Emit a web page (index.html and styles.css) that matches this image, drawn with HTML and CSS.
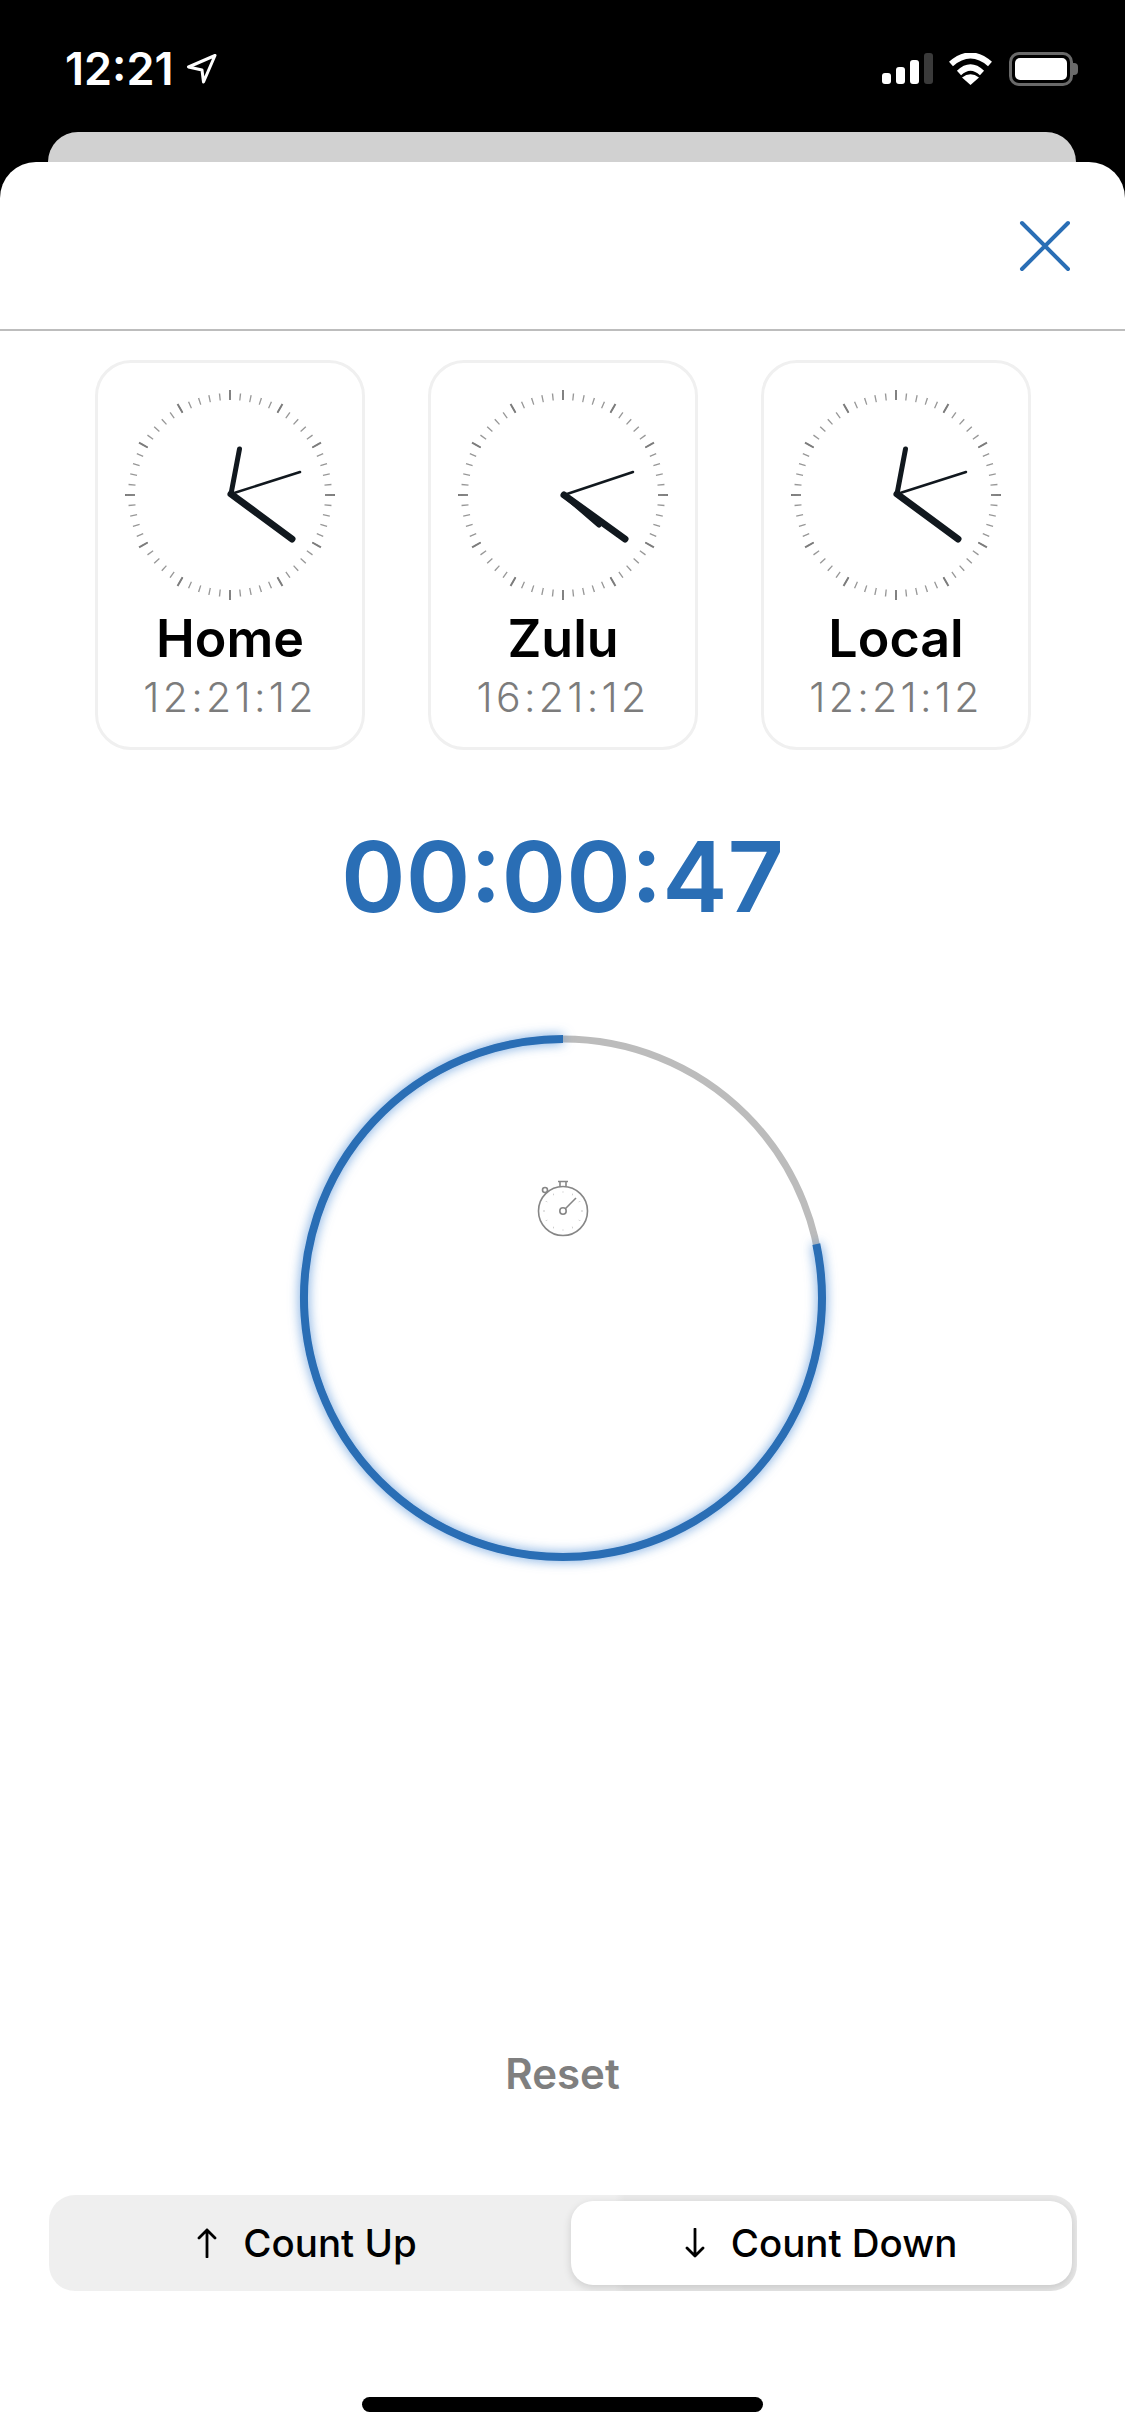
FILE: index.html
```html
<!DOCTYPE html>
<html lang="en">
<head>
<meta charset="utf-8">
<title>Timer</title>
<link rel="stylesheet" href="styles.css">
</head>
<body>
<svg class="defs" width="0" height="0" aria-hidden="true">
  <defs>
    <g id="face" fill="none">
      <circle class="tick-minor" r="98.5" pathLength="60" stroke-dasharray="0.13 0.87" stroke-dashoffset="0.065"/>
      <circle class="tick-major" r="100" pathLength="12" stroke-dasharray="0.036 0.964" stroke-dashoffset="0.018"/>
    </g>
  </defs>
</svg>
<div class="status">
  <div class="status-left">
    <span class="status-time">12:21</span>
    <svg class="loc" width="32" height="30" viewBox="0 0 32 30"><path d="M29 1.500 2.500 13 16 16 17.500 28Z" fill="none" stroke="#fff" stroke-width="3" stroke-linejoin="round"/></svg>
  </div>
  <div class="status-right">
    <div class="signal"><i class="b1"></i><i class="b2"></i><i class="b3"></i><i class="b4"></i></div>
    <svg class="wifi" width="45" height="32" viewBox="0 0 45 32"><path d="M3 11Q22.500-6 42 11M11 20Q22.500 9 34 20" fill="none" stroke="#fff" stroke-width="6"/><path d="M22.500 32 14 24.500Q22.500 18 31 24.500Z" fill="#fff"/></svg>
    <div class="battery"><div class="battery-fill"></div></div>
    <div class="battery-nub"></div>
  </div>
</div>
<div class="back-card"></div>
<main class="sheet">
  <header class="sheet-head">
    <svg class="close" width="52" height="52" viewBox="0 0 52 52"><path d="M3 3 49 49M49 3 3 49" stroke="#2a6eb5" stroke-width="4" stroke-linecap="round"/></svg>
  </header>
  <section class="clocks">
    <article class="clock-card">
      <svg class="dial" width="220" height="220" viewBox="-110 -110 220 220">
        <use href="#face"/>
        <path class="hand-hour" d="M1-1 9.500-46"/>
        <path class="hand-min" d="M1-1 62 44"/>
        <path class="hand-sec" d="M1-1 70-23"/>
      </svg>
      <h2 class="clock-name">Home</h2>
      <p class="clock-time">12:21:12</p>
    </article>
    <article class="clock-card">
      <svg class="dial" width="220" height="220" viewBox="-110 -110 220 220">
        <use href="#face"/>
        <path class="hand-hour" d="M1 0 36 30"/>
        <path class="hand-min" d="M1 0 62 44"/>
        <path class="hand-sec" d="M1 0 70-23"/>
      </svg>
      <h2 class="clock-name">Zulu</h2>
      <p class="clock-time">16:21:12</p>
    </article>
    <article class="clock-card">
      <svg class="dial" width="220" height="220" viewBox="-110 -110 220 220">
        <use href="#face"/>
        <path class="hand-hour" d="M1-1 9.500-46"/>
        <path class="hand-min" d="M1-1 62 44"/>
        <path class="hand-sec" d="M1-1 70-23"/>
      </svg>
      <h2 class="clock-name">Local</h2>
      <p class="clock-time">12:21:12</p>
    </article>
  </section>
  <div class="timer">00:00:47</div>
  <svg class="ring" width="560" height="560" viewBox="0 0 560 560">
    <circle class="ring-track" cx="280" cy="280" r="259"/>
    <path class="ring-progress" d="M533.300 226.100A259 259 0 1 1 280 21"/>
    <g class="watch">
      <circle cx="280" cy="193" r="24.500"/>
      <path d="M275 163.500H285M277 164V168.500M283 164V168.500"/>
      <circle cx="262" cy="172" r="2.500"/>
      <circle cx="280" cy="193" r="3.200"/>
      <path d="M282.300 190.700 293 180"/>
      <circle class="watch-dots" cx="280" cy="193" r="19" pathLength="12" stroke-dasharray="0.03 0.97" stroke-dashoffset="0.015"/>
    </g>
  </svg>
  <div class="reset">Reset</div>
  <div class="segment">
    <div class="seg-btn seg-left">
      <svg width="20" height="30" viewBox="0 0 20 30"><path d="M10 29V2M2 10 10 2 18 10" fill="none" stroke="#000" stroke-width="2.800" stroke-linecap="round" stroke-linejoin="round"/></svg>
      <span>Count Up</span>
    </div>
    <div class="seg-btn seg-active">
      <svg width="20" height="30" viewBox="0 0 20 30"><path d="M10 1V28M2 20 10 28 18 20" fill="none" stroke="#000" stroke-width="2.800" stroke-linecap="round" stroke-linejoin="round"/></svg>
      <span>Count Down</span>
    </div>
  </div>
  <div class="home-bar"></div>
</main>
</body>
</html>
```

FILE: styles.css
```css
* { box-sizing: border-box; }
html, body { margin: 0; padding: 0; }
body {
  width: 1125px;
  height: 2436px;
  background: #000;
  overflow: hidden;
  font-family: "Inter", "Liberation Sans", sans-serif;
  display: flex;
  flex-direction: column;
}
.defs { position: absolute; }

.status {
  height: 132px;
  flex: none;
  padding: 52px 47px 0 65px;
  display: flex;
  justify-content: space-between;
  align-items: flex-start;
  color: #fff;
}
.status-left { display: flex; align-items: center; height: 34px; }
.status-time {
  font-weight: 600;
  font-size: 45px;
  line-height: 34px;
}
.loc { margin-left: 13px; }
.status-right { display: flex; align-items: flex-start; height: 34px; }
.signal { display: flex; gap: 5px; align-items: flex-end; height: 32px; margin-right: 15px; }
.signal i { display: block; width: 9px; background: #fff; border-radius: 3px; }
.signal .b1 { height: 11px; }
.signal .b2 { height: 17px; }
.signal .b3 { height: 24px; }
.signal .b4 { height: 31px; background: #3a3a3a; }
.wifi { margin-top: 1px; margin-right: 16px; }
.battery {
  width: 64px;
  height: 34px;
  border: 3px solid #6a6a6a;
  border-radius: 10px;
  padding: 3px;
}
.battery-fill { width: 100%; height: 100%; background: #fff; border-radius: 5px; }
.battery-nub {
  width: 5px;
  height: 12px;
  margin-top: 11px;
  background: #6a6a6a;
  border-radius: 0 4px 4px 0;
}

.back-card {
  height: 30px;
  flex: none;
  margin: 0 49px 0 48px;
  background: #d1d1d1;
  border-radius: 30px 30px 0 0;
}

.sheet {
  flex: 1;
  background: #fff;
  border-radius: 36px 36px 0 0;
  display: flex;
  flex-direction: column;
  align-items: center;
}
.sheet-head {
  width: 100%;
  height: 169px;
  flex: none;
  border-bottom: 2px solid #bdbdbd;
  padding: 58px 54px 0 0;
  display: flex;
  justify-content: flex-end;
  align-items: flex-start;
}

.clocks {
  display: flex;
  gap: 63px;
  margin-top: 29px;
  padding-left: 1px;
}
.clock-card {
  width: 270px;
  height: 390px;
  border: 3px solid #f0f0f0;
  border-radius: 36px;
  padding-top: 22px;
  display: flex;
  flex-direction: column;
  align-items: center;
}
.dial { display: block; flex: none; }
.tick-minor { stroke: #989898; stroke-width: 7; }
.tick-major { stroke: #7c7c7c; stroke-width: 10; }
.hand-hour, .hand-min, .hand-sec { fill: none; stroke: #11181e; stroke-linecap: round; }
.hand-hour { stroke-width: 5; }
.hand-min { stroke-width: 7; }
.hand-sec { stroke-width: 2.500; }
.clock-name {
  margin: 4px 0 0;
  font-size: 52px;
  font-weight: 600;
  line-height: 60px;
  color: #000;
}
.clock-time {
  margin: 0;
  font-size: 41px;
  font-weight: 300;
  line-height: 56px;
  letter-spacing: 3.300px;
  color: #7c7c7c;
}

.timer {
  margin-top: 62px;
  font-size: 98px;
  font-weight: 600;
  line-height: 130px;
  color: #2a6eb5;
}
.ring { display: block; flex: none; margin-top: 76px; }
.ring-track { fill: none; stroke: #bcbcbc; stroke-width: 7; }
.ring-progress {
  fill: none;
  stroke: #2a6eb5;
  stroke-width: 8;
  filter: drop-shadow(0 0 6px rgba(60, 130, 210, .8));
}
.watch circle, .watch path { fill: none; stroke: #868686; stroke-width: 1.600; }
.watch .watch-dots { stroke-width: 2; stroke: #8c8c8c; }

.reset {
  margin-top: 468px;
  font-size: 42px;
  font-weight: 600;
  line-height: 56px;
  color: #7f7f7f;
}
.segment {
  margin-top: 93px;
  width: 1028px;
  height: 96px;
  flex: none;
  display: flex;
  padding: 6px 5px 6px 0;
  background: linear-gradient(90deg, #efefef 0 55%, #e8e8e8 56%);
  border-radius: 26px;
  overflow: hidden;
}
.seg-btn {
  flex: 1;
  display: flex;
  align-items: center;
  justify-content: center;
  gap: 26px;
  font-size: 38.500px;
  font-weight: 500;
  color: #000;
  border-radius: 22px;
}
.seg-left { padding-right: 5px; }
.seg-active {
  flex: none;
  width: 501px;
  background: #fff;
  box-shadow: 0 3px 8px rgba(0, 0, 0, .14);
}
.home-bar {
  margin-top: 106px;
  width: 401px;
  height: 15px;
  flex: none;
  background: #000;
  border-radius: 8px;
}
```
